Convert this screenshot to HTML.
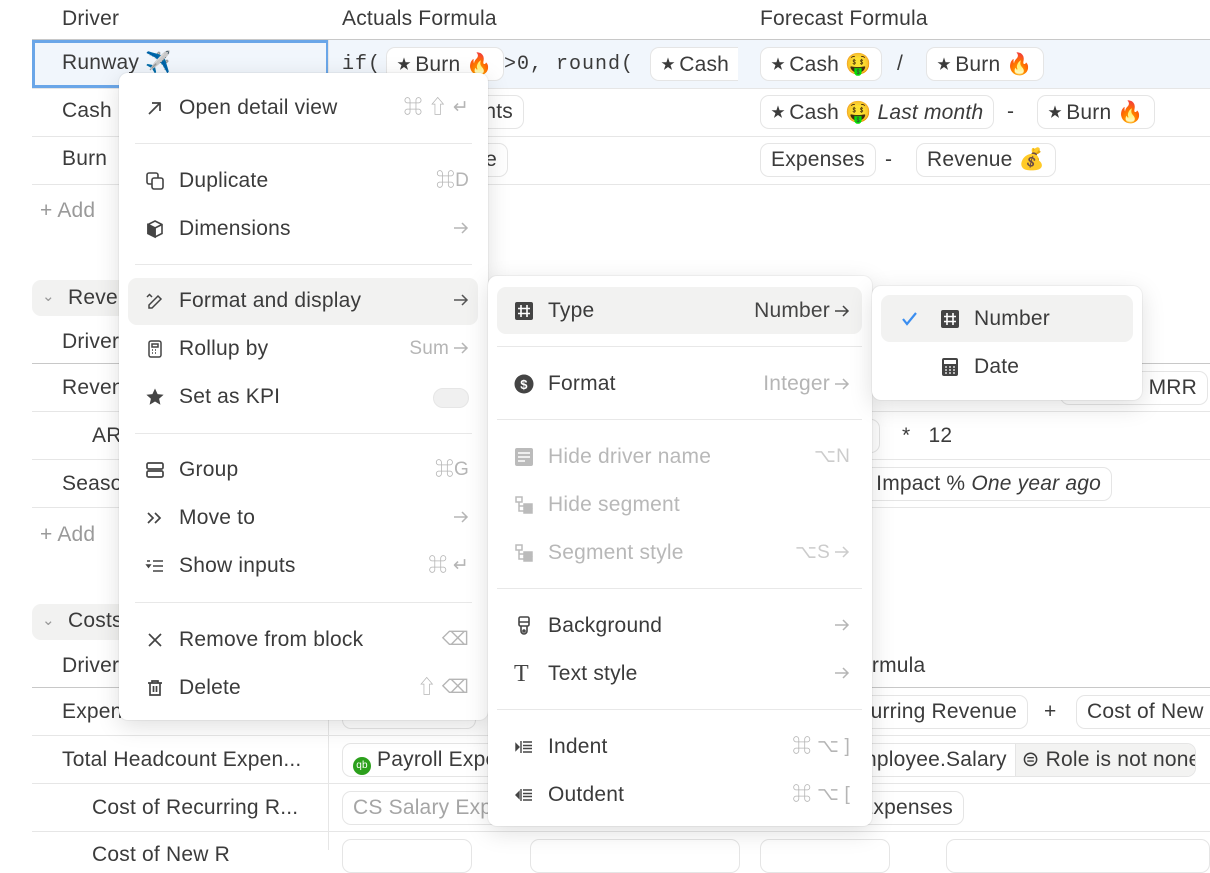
<!DOCTYPE html>
<html><head><meta charset="utf-8"><style>
*{box-sizing:border-box;margin:0;padding:0}
body{width:1210px;height:850px;overflow:hidden;background:#fff;font-family:"Liberation Sans","Noto Sans CJK SC",sans-serif;color:#3b3b3b;position:relative;font-size:21px;letter-spacing:.2px}
.a{position:absolute;white-space:nowrap}
.hl{position:absolute;height:1px;background:#e6e6e6}
.pill{position:absolute;height:34px;line-height:32px;border:1px solid #e5e5e5;border-radius:9px;padding:0 10px;background:#fff;white-space:nowrap}
.mono{font-family:"Liberation Mono",monospace}
.st{font-size:14px;vertical-align:2px;margin-right:4px}
.menu{position:absolute;background:#fff;border-radius:9px;box-shadow:0 6px 24px rgba(0,0,0,.13),0 0 0 1px rgba(0,0,0,.04)}
.it{position:absolute;height:48px;line-height:48px;white-space:nowrap}
.sh{position:absolute;right:0;color:#b5b5b5;font-size:19px}
.sep{position:absolute;height:1px;background:#e8e8e8}
.ic{position:absolute;top:14px;width:20px;height:20px}
.dis{color:#b8b8b8}
.ar{display:inline-block;width:16px;height:16px;vertical-align:-2px;margin-left:4px}
</style></head><body>
<svg width="0" height="0" style="position:absolute"><defs><symbol id="arr" viewBox="0 0 16 16"><path d="M1 8h13M9 3l5 5-5 5" fill="none" stroke="currentColor" stroke-width="1.5"/></symbol></defs></svg>

<!-- background table -->
<div class="a" style="left:62px;top:7px">Driver</div>
<div class="a" style="left:342px;top:7px">Actuals Formula</div>
<div class="a" style="left:760px;top:7px">Forecast Formula</div>
<div class="hl" style="left:32px;top:39px;width:1178px;background:#c8c8c8"></div>
<div class="a" style="left:32px;top:40px;width:1178px;height:48px;background:#f1f6fc"></div>
<div class="a" style="left:32px;top:40px;width:297px;height:48px;border:3px solid #6aa6e8"></div>
<div class="a" style="left:62px;top:51px">Runway ✈️</div>
<div class="a mono" style="left:342px;top:53px;font-size:20px;letter-spacing:1px">if(</div>
<div class="pill" style="left:386px;top:47px"><span class="st">★</span>Burn 🔥</div>
<div class="a mono" style="left:504px;top:53px;font-size:20px;letter-spacing:1px">&gt;0, round(</div>
<div class="pill" style="left:650px;top:47px;border-right:none;border-radius:9px 0 0 9px;width:88px;overflow:hidden"><span class="st">★</span>Cash</div>
<div class="pill" style="left:760px;top:47px"><span class="st">★</span>Cash 🤑</div>
<div class="a" style="left:897px;top:52px">/</div>
<div class="pill" style="left:926px;top:47px"><span class="st">★</span>Burn 🔥</div>
<div class="hl" style="left:32px;top:88px;width:1178px"></div>
<div class="a" style="left:62px;top:99px">Cash</div>
<div class="pill" style="left:420px;top:95px;width:104px;text-align:right">nts</div>
<div class="pill" style="left:760px;top:95px"><span class="st">★</span>Cash 🤑 <i>Last month</i></div>
<div class="a" style="left:1007px;top:100px">-</div>
<div class="pill" style="left:1037px;top:95px"><span class="st">★</span>Burn 🔥</div>
<div class="hl" style="left:32px;top:136px;width:1178px"></div>
<div class="a" style="left:62px;top:147px">Burn</div>
<div class="pill" style="left:420px;top:143px;width:88px;text-align:right">e</div>
<div class="pill" style="left:760px;top:143px">Expenses</div>
<div class="a" style="left:885px;top:148px">-</div>
<div class="pill" style="left:916px;top:143px">Revenue 💰</div>
<div class="hl" style="left:32px;top:184px;width:1178px"></div>
<div class="a" style="left:40px;top:199px;color:#9a9a9a">+ Add</div>
<div class="a" style="left:328px;top:40px;width:1px;height:144px;background:#e6e6e6"></div>

<div class="a" style="left:32px;top:280px;width:120px;height:36px;background:#f2f2f1;border-radius:9px"></div>
<div class="a" style="left:42px;top:287px;color:#999;font-size:15px">⌄</div>
<div class="a" style="left:68px;top:286px">Revenue</div>
<div class="a" style="left:62px;top:330px">Driver</div>
<div class="hl" style="left:32px;top:363px;width:1178px;background:#c8c8c8"></div>
<div class="a" style="left:62px;top:376px">Revenue</div>
<div class="pill" style="left:1060px;top:371px;width:148px;text-align:right">d MRR</div>
<div class="hl" style="left:32px;top:411px;width:1178px"></div>
<div class="a" style="left:92px;top:424px">ARR</div>
<div class="pill" style="left:830px;top:419px;width:50px"></div>
<div class="a" style="left:902px;top:424px">*&nbsp;&nbsp;&nbsp;12</div>
<div class="hl" style="left:32px;top:459px;width:1178px"></div>
<div class="a" style="left:62px;top:472px">Seasonality</div>
<div class="pill" style="left:840px;top:467px;width:272px;text-align:right">y Impact % <i>One year ago</i></div>
<div class="hl" style="left:32px;top:507px;width:1178px"></div>
<div class="a" style="left:40px;top:523px;color:#9a9a9a">+ Add</div>

<div class="a" style="left:32px;top:604px;width:120px;height:36px;background:#f2f2f1;border-radius:9px"></div>
<div class="a" style="left:42px;top:611px;color:#999;font-size:15px">⌄</div>
<div class="a" style="left:68px;top:609px">Costs</div>
<div class="a" style="left:62px;top:654px">Driver</div>
<div class="a" style="left:860px;top:654px">ormula</div>
<div class="hl" style="left:32px;top:687px;width:1178px;background:#c8c8c8"></div>
<div class="a" style="left:62px;top:700px">Expenses</div>
<div class="pill" style="left:342px;top:695px;width:134px"></div>
<div class="pill" style="left:820px;top:695px;width:208px;text-align:right;overflow:hidden">curring Revenue</div>
<div class="a" style="left:1044px;top:700px">+</div>
<div class="pill" style="left:1076px;top:695px;width:150px">Cost of New R</div>
<div class="hl" style="left:32px;top:735px;width:1178px"></div>
<div class="a" style="left:62px;top:748px">Total Headcount Expen...</div>
<div class="pill" style="left:342px;top:743px;width:160px;overflow:hidden"><span style="display:inline-block;width:18px;height:18px;border-radius:50%;background:#2ca01c;color:#fff;font-size:10px;line-height:18px;text-align:center;vertical-align:-2px">qb</span> Payroll Expe</div>
<div class="pill" style="left:820px;top:743px;width:376px;padding-left:44px;overflow:hidden">nployee.Salary <span style="display:inline-block;background:#f3f3f2;padding:0 8px 0 6px;margin-left:2px;border-left:1px solid #e5e5e5">⊜ Role is not none</span></div>
<div class="hl" style="left:32px;top:783px;width:1178px"></div>
<div class="a" style="left:92px;top:796px">Cost of Recurring R...</div>
<div class="pill" style="left:342px;top:791px;width:160px;color:#a5a5a5;overflow:hidden">CS Salary Expe</div>
<div class="pill" style="left:820px;top:791px;width:144px;text-align:right">Expenses</div>
<div class="hl" style="left:32px;top:831px;width:1178px"></div>
<div class="a" style="left:92px;top:843px">Cost of New R</div>
<div class="pill" style="left:342px;top:839px;width:130px"></div>
<div class="pill" style="left:530px;top:839px;width:210px"></div>
<div class="pill" style="left:760px;top:839px;width:130px"></div>
<div class="pill" style="left:946px;top:839px;width:264px"></div>
<div class="a" style="left:328px;top:688px;width:1px;height:162px;background:#e6e6e6"></div>

<!-- menu 1 -->
<div class="menu" style="left:119px;top:73px;width:369px;height:647px">
 <div class="a" style="left:9px;top:205px;width:350px;height:47px;background:#f2f2f1;border-radius:9px"></div>
 <div class="it" style="left:26px;top:11px;width:324px"><svg class="ic" viewBox="0 0 20 20" fill="none" stroke="#444" stroke-width="1.7"><path d="M4 16L15 5M7 5h8v8"/></svg><span style="margin-left:34px">Open detail view</span><span class="sh">⌘ ⇧ ↵</span></div>
 <div class="sep" style="left:16px;top:70px;width:337px"></div>
 <div class="it" style="left:26px;top:84px;width:324px"><svg class="ic" viewBox="0 0 20 20" fill="none" stroke="#444" stroke-width="1.6"><rect x="2" y="2" width="11" height="11" rx="2"/><rect x="7" y="7" width="11" height="11" rx="2" fill="#fff"/></svg><span style="margin-left:34px">Duplicate</span><span class="sh">⌘D</span></div>
 <div class="it" style="left:26px;top:132px;width:324px"><svg class="ic" viewBox="0 0 20 20" fill="none" stroke="#444" stroke-width="1.6"><path d="M10 2l7 3.5v9L10 18l-7-3.5v-9z"/><path d="M3 5.5L10 9l7-3.5M10 9v9" /><path d="M3 5.5v9L10 18V9z" fill="#444"/></svg><span style="margin-left:34px">Dimensions</span><span class="sh"><svg class="ar"><use href="#arr"/></svg></span></div>
 <div class="sep" style="left:16px;top:191px;width:337px"></div>
 <div class="it" style="left:26px;top:204px;width:324px"><svg class="ic" viewBox="0 0 20 20" fill="none" stroke="#444" stroke-width="1.5"><path d="M4 14l9-9 3 3-9 9H4z"/><path d="M4 3l3 3M2 6l2-2"/></svg><span style="margin-left:34px">Format and display</span><span class="sh" style="color:#555"><svg class="ar"><use href="#arr"/></svg></span></div>
 <div class="it" style="left:26px;top:252px;width:324px"><svg class="ic" viewBox="0 0 20 20" fill="none" stroke="#444" stroke-width="1.5"><rect x="4" y="2" width="12" height="16" rx="2"/><rect x="7" y="5" width="6" height="3"/><path d="M7 11h1M10 11h1M13 11h0M7 14h1M10 14h1M13 14h0"/></svg><span style="margin-left:34px">Rollup by</span><span class="sh">Sum<svg class="ar"><use href="#arr"/></svg></span></div>
 <div class="it" style="left:26px;top:300px;width:324px"><svg class="ic" viewBox="0 0 20 20"><path fill="#444" d="M10 1.5l2.6 5.6 6 .6-4.5 4 1.3 6-5.4-3.2-5.4 3.2 1.3-6-4.5-4 6-.6z"/></svg><span style="margin-left:34px">Set as KPI</span><span style="position:absolute;right:0;top:15px;width:36px;height:20px;border-radius:10px;background:#f0f0f0;border:1px solid #e6e6e6"></span></div>
 <div class="sep" style="left:16px;top:360px;width:337px"></div>
 <div class="it" style="left:26px;top:373px;width:324px"><svg class="ic" viewBox="0 0 20 20" fill="none" stroke="#444" stroke-width="1.7"><rect x="2" y="3" width="16" height="6" rx="1.5"/><rect x="2" y="11" width="16" height="6" rx="1.5"/></svg><span style="margin-left:34px">Group</span><span class="sh">⌘G</span></div>
 <div class="it" style="left:26px;top:421px;width:324px"><svg class="ic" viewBox="0 0 20 20" fill="none" stroke="#444" stroke-width="1.7"><path d="M3 5l5 5-5 5M10 5l5 5-5 5"/></svg><span style="margin-left:34px">Move to</span><span class="sh"><svg class="ar"><use href="#arr"/></svg></span></div>
 <div class="it" style="left:26px;top:469px;width:324px"><svg class="ic" viewBox="0 0 20 20" fill="none" stroke="#444" stroke-width="1.6"><path d="M8 5h10M8 10h10M8 15h10M2 5h3"/><path d="M2 9l1.5 2L5 9z" fill="#444"/></svg><span style="margin-left:34px">Show inputs</span><span class="sh">⌘ ↵</span></div>
 <div class="sep" style="left:16px;top:529px;width:337px"></div>
 <div class="it" style="left:26px;top:543px;width:324px"><svg class="ic" viewBox="0 0 20 20" fill="none" stroke="#444" stroke-width="1.7"><path d="M4 4l12 12M16 4L4 16"/></svg><span style="margin-left:34px">Remove from block</span><span class="sh">⌫</span></div>
 <div class="it" style="left:26px;top:591px;width:324px"><svg class="ic" viewBox="0 0 20 20" fill="none" stroke="#444" stroke-width="1.7"><path d="M3 5h14M7 5V3h6v2M5 5v12h10V5M8.5 8v6M11.5 8v6"/></svg><span style="margin-left:34px">Delete</span><span class="sh">⇧ ⌫</span></div>
</div>

<!-- menu 2 -->
<div class="menu" style="left:488px;top:276px;width:384px;height:550px">
 <div class="a" style="left:9px;top:11px;width:365px;height:47px;background:#f2f2f1;border-radius:9px"></div>
 <div class="it" style="left:26px;top:11px;width:336px"><svg class="ic" viewBox="0 0 20 20"><rect x="1" y="1" width="18" height="18" rx="2" fill="#444"/><path d="M7 4v12M13 4v12M4 7.5h12M4 12.5h12" stroke="#fff" stroke-width="1.6"/></svg><span style="margin-left:34px">Type</span><span class="sh" style="color:#444;font-size:21px">Number<svg class="ar"><use href="#arr"/></svg></span></div>
 <div class="sep" style="left:9px;top:70px;width:365px"></div>
 <div class="it" style="left:26px;top:84px;width:336px"><svg class="ic" viewBox="0 0 20 20"><circle cx="10" cy="10" r="9.5" fill="#444"/><text x="10" y="15" font-size="13" fill="#fff" text-anchor="middle" font-family="Liberation Sans" font-weight="bold">$</text></svg><span style="margin-left:34px">Format</span><span class="sh" style="font-size:21px">Integer<svg class="ar"><use href="#arr"/></svg></span></div>
 <div class="sep" style="left:9px;top:143px;width:365px"></div>
 <div class="it dis" style="left:26px;top:157px;width:336px"><svg class="ic" viewBox="0 0 20 20"><rect x="1" y="1" width="18" height="18" rx="2" fill="#bbb"/><path d="M4 6h12M4 10h12M4 14h7" stroke="#fff" stroke-width="1.6"/></svg><span style="margin-left:34px">Hide driver name</span><span class="sh" style="color:#ccc">⌥N</span></div>
 <div class="it dis" style="left:26px;top:205px;width:336px"><svg class="ic" viewBox="0 0 20 20" fill="none" stroke="#bbb" stroke-width="1.5"><rect x="2" y="2" width="6" height="5"/><path d="M5 7v9h5M5 11h5"/><rect x="10" y="9" width="8" height="4" fill="#bbb"/><rect x="10" y="14" width="8" height="4" fill="#bbb"/></svg><span style="margin-left:34px">Hide segment</span></div>
 <div class="it dis" style="left:26px;top:253px;width:336px"><svg class="ic" viewBox="0 0 20 20" fill="none" stroke="#bbb" stroke-width="1.5"><rect x="2" y="2" width="6" height="5"/><path d="M5 7v9h5M5 11h5"/><rect x="10" y="9" width="8" height="4" fill="#bbb"/><rect x="10" y="14" width="8" height="4" fill="#bbb"/></svg><span style="margin-left:34px">Segment style</span><span class="sh" style="color:#ccc">⌥S<svg class="ar"><use href="#arr"/></svg></span></div>
 <div class="sep" style="left:9px;top:312px;width:365px"></div>
 <div class="it" style="left:26px;top:326px;width:336px"><svg class="ic" viewBox="0 0 20 20" fill="none" stroke="#444" stroke-width="1.6"><rect x="5" y="1" width="10" height="9" rx="1.5"/><path d="M5 6h10M7 10v5a3 3 0 006 0v-5"/><circle cx="10" cy="15" r="1"/></svg><span style="margin-left:34px">Background</span><span class="sh"><svg class="ar"><use href="#arr"/></svg></span></div>
 <div class="it" style="left:26px;top:374px;width:336px"><span class="a" style="left:0;top:0;font-family:'Liberation Serif',serif;font-size:24px;color:#444">T</span><span style="margin-left:34px">Text style</span><span class="sh"><svg class="ar"><use href="#arr"/></svg></span></div>
 <div class="sep" style="left:9px;top:433px;width:365px"></div>
 <div class="it" style="left:26px;top:447px;width:336px"><svg class="ic" viewBox="0 0 20 20" fill="none" stroke="#444" stroke-width="1.4"><path d="M9 5h9M9 8.5h9M9 11.5h9M9 15h9M7 4v12"/><path d="M2 7l3 3-3 3z" fill="#444"/></svg><span style="margin-left:34px">Indent</span><span class="sh">⌘ ⌥ ]</span></div>
 <div class="it" style="left:26px;top:495px;width:336px"><svg class="ic" viewBox="0 0 20 20" fill="none" stroke="#444" stroke-width="1.4"><path d="M9 5h9M9 8.5h9M9 11.5h9M9 15h9M7 4v12"/><path d="M5 7l-3 3 3 3z" fill="#444"/></svg><span style="margin-left:34px">Outdent</span><span class="sh">⌘ ⌥ [</span></div>
</div>

<!-- menu 3 -->
<div class="menu" style="left:872px;top:286px;width:270px;height:114px">
 <div class="a" style="left:9px;top:9px;width:252px;height:47px;background:#f2f2f1;border-radius:9px"></div>
 <div class="it" style="left:28px;top:9px"><svg class="ic" style="left:0" viewBox="0 0 20 20" fill="none" stroke="#3b8ef0" stroke-width="2.2"><path d="M3 10l4 5 9-11"/></svg><svg class="ic" style="left:40px" viewBox="0 0 20 20"><rect x="1" y="1" width="18" height="18" rx="2" fill="#444"/><path d="M7 4v12M13 4v12M4 7.5h12M4 12.5h12" stroke="#fff" stroke-width="1.6"/></svg><span style="margin-left:74px">Number</span></div>
 <div class="it" style="left:28px;top:57px"><svg class="ic" style="left:40px" viewBox="0 0 20 20"><rect x="2" y="1" width="16" height="18" rx="2" fill="#444"/><rect x="4" y="3" width="12" height="4" fill="#fff"/><path d="M5 10h2M9 10h2M13 10h2M5 13h2M9 13h2M13 13h2M5 16h2M9 16h2M13 16h2" stroke="#fff" stroke-width="1.3"/></svg><span style="margin-left:74px">Date</span></div>
</div>
</body></html>
